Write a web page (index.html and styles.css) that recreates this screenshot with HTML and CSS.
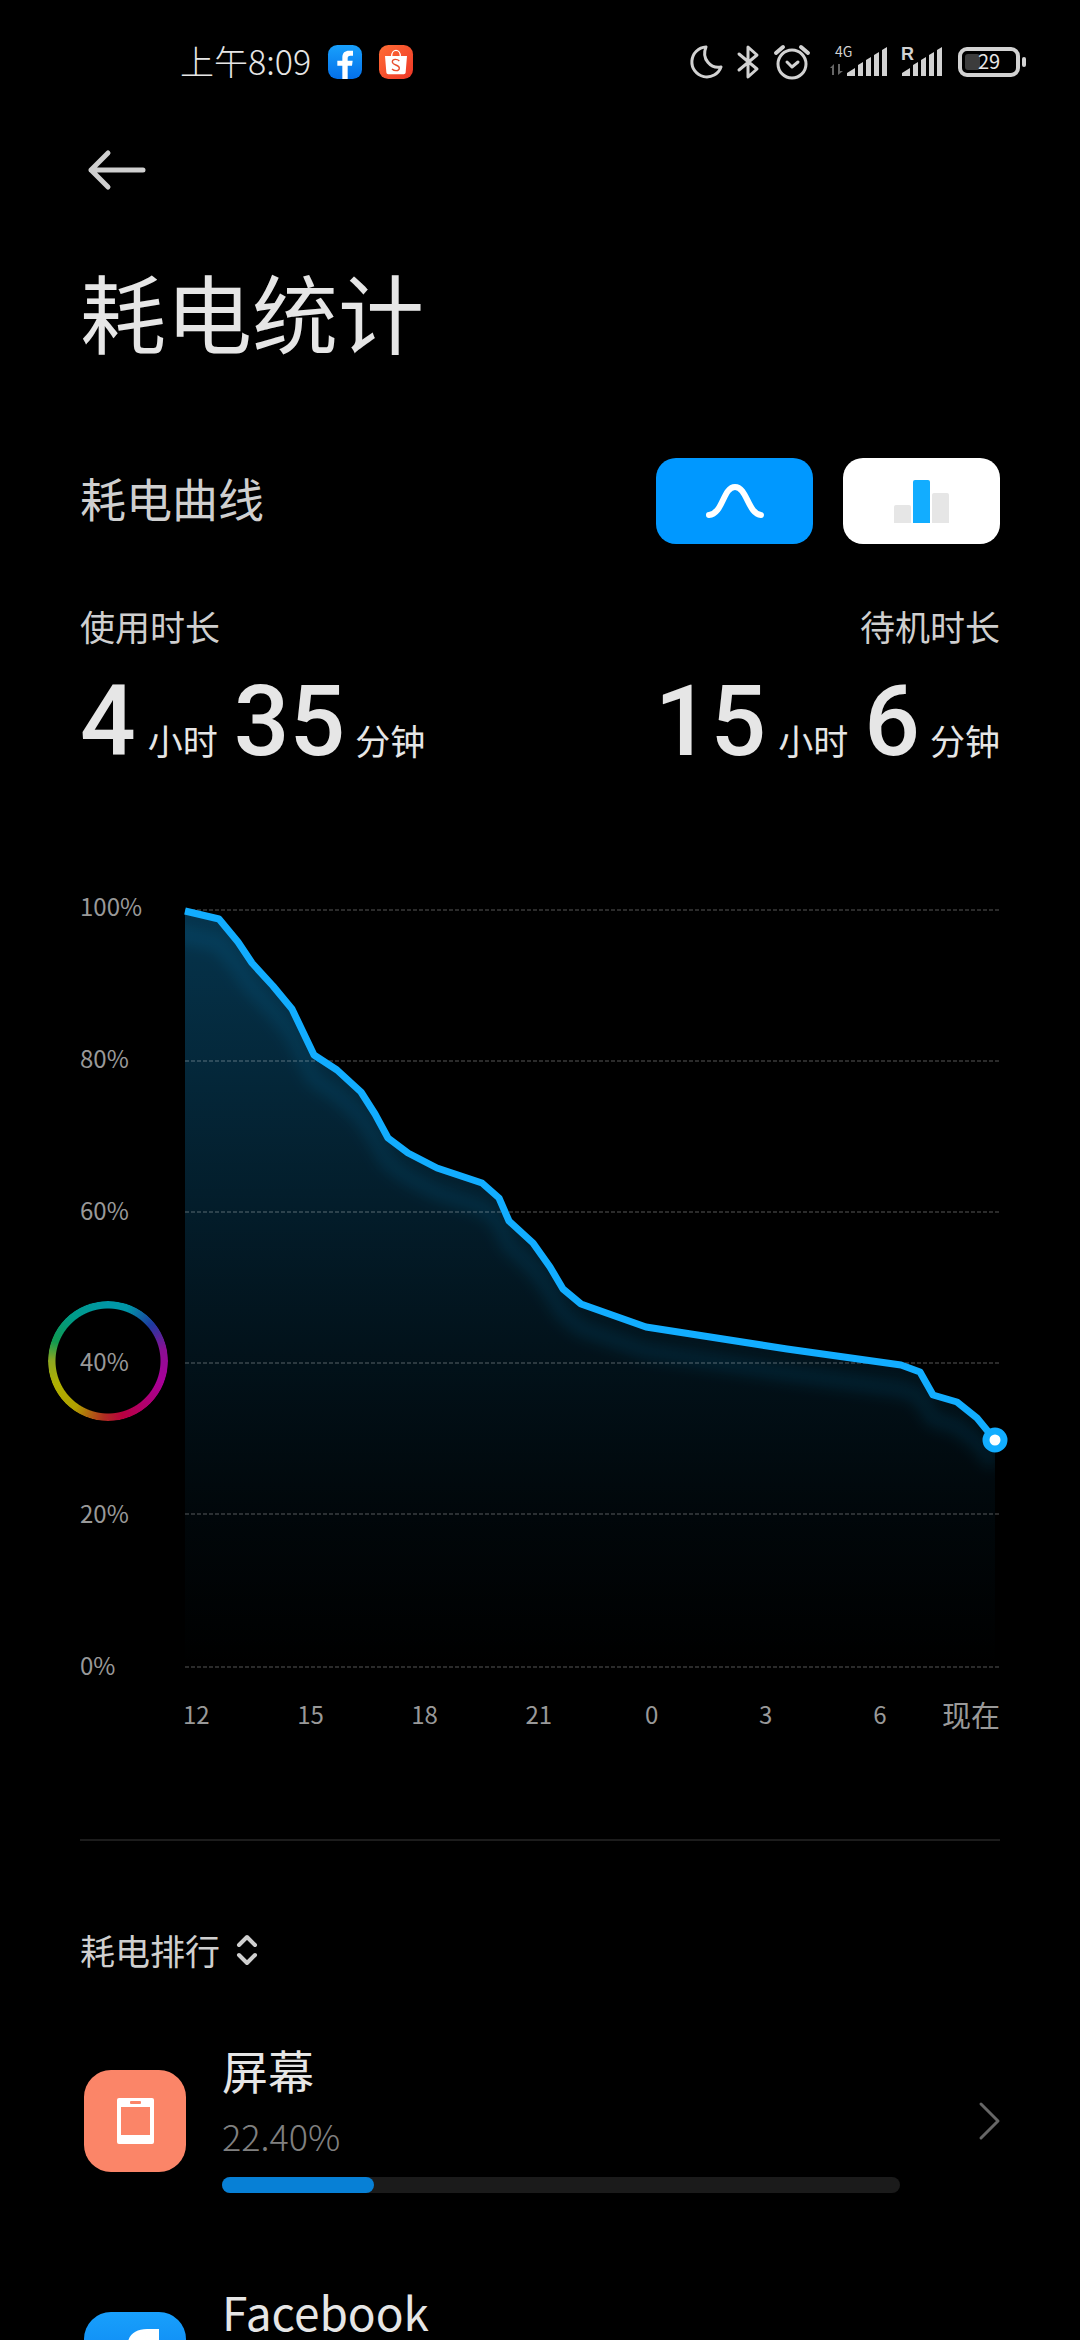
FILE: index.html
```html
<!DOCTYPE html>
<html lang="zh-CN">
<head>
    <meta charset="UTF-8">
    <meta name="viewport" content="width=device-width, initial-scale=1.0">
    <title>耗电统计</title>
    <link rel="stylesheet" href="styles.css">
</head>
<body>
    <div class="status-bar">
        <div class="status-left">
            <time datetime="08:09">上午8:09</time>
            <svg class="app-badge" viewBox="0 0 102 102">
                <rect width="102" height="102" rx="28" fill="url(#fb-bg)"/>
                <path d="M43 102V62H28V47h15V37c0-14 8-20 20-20h12v15h-8c-6 0-8 3-8 8v7h15l-2 15H59v40z" fill="#fff"/>
            </svg>
            <svg class="app-badge" viewBox="0 0 102 102">
                <rect width="102" height="102" rx="28" fill="url(#shop-bg)"/>
                <path d="M38 34c0-24 26-24 26 0" fill="none" stroke="#fff" stroke-width="4"/>
                <path d="M18 33h66l-4 49c0 4-3 6-6 6H28c-3 0-6-2-6-6z" fill="#fff"/>
                <path d="M61 48c-6-6-20-7-21 2-1 12 22 8 21 20-1 9-15 9-22 2" fill="none" stroke="#e8502f" stroke-width="4"/>
            </svg>
        </div>
        <div class="status-right">
            <svg width="32" height="34" viewBox="0 0 32 34" fill="none" stroke="#d2d2d2" stroke-width="3" stroke-linejoin="round">
                <path d="M16 2A15 15 0 1 0 31 22C21 24 11 14 16 2z"/>
            </svg>
            <svg width="24" height="34" viewBox="0 0 24 34" fill="none" stroke="#d2d2d2" stroke-width="3" stroke-linecap="round" stroke-linejoin="round">
                <path d="M3 9l18 15-9 8V2l9 8L3 25"/>
            </svg>
            <svg width="36" height="34" viewBox="0 0 36 34" fill="none" stroke="#d2d2d2" stroke-width="3" stroke-linecap="round" stroke-linejoin="round">
                <circle cx="18" cy="19" r="14"/>
                <path d="M13 17l5 5 6-5"/>
                <path d="M2 8l7-6M34 8l-7-6" stroke-width="4"/>
            </svg>
            <svg width="63" height="34" viewBox="0 0 63 34" fill="#d2d2d2">
                <text class="net" x="11" y="12">4G</text>
                <path d="M10 19v11H8v-7H6zM14 30V19h2v7h3z" fill="#666"/>
                <path d="M23 31v-3l8-5v8zM34 31V20l5-3v14zM42 31V15l5-3v19zM50 31V10l5-3v24zM58 31V5l5-3v29z"/>
            </svg>
            <svg width="43" height="34" viewBox="0 0 43 34" fill="#d2d2d2">
                <text class="roam" x="0" y="15">R</text>
                <path d="M1 31v-3l8-5v8zM12 31V20l5-3v14zM20 31V15l5-3v19zM28 31V10l5-3v24zM36 31V5l5-3v29z"/>
            </svg>
            <svg width="68" height="34" viewBox="0 0 68 34">
                <rect x="2" y="4" width="58" height="26" rx="7" fill="none" stroke="#d2d2d2" stroke-width="4"/>
                <rect x="64" y="12" width="4" height="10" rx="2" fill="#d2d2d2"/>
                <rect x="7" y="9" width="15" height="16" rx="3" fill="#3c3c3c"/>
                <text class="level" x="31" y="24" text-anchor="middle">29</text>
            </svg>
        </div>
    </div>

    <main class="page">
        <button type="button" class="back" aria-label="返回">
            <svg width="58" height="40" viewBox="0 0 58 40" fill="none" stroke="#d0d0d0" stroke-width="5" stroke-linecap="round" stroke-linejoin="round">
                <path d="M55 20H3M20 3L3 20l17 17"/>
            </svg>
        </button>

        <h1>耗电统计</h1>

        <div class="curve-head">
            <h2>耗电曲线</h2>
            <div class="switch">
                <button type="button" class="switch-btn active" aria-label="曲线">
                    <svg width="60" height="44" viewBox="0 0 60 44" fill="none" stroke="#fff" stroke-width="6" stroke-linecap="round">
                        <path d="M4 36C18 35 18 8 30 8s13 27 26 28"/>
                    </svg>
                </button>
                <button type="button" class="switch-btn" aria-label="柱状图">
                    <svg width="55" height="44" viewBox="0 0 55 44">
                        <path d="M0 44V28q0-2 2-2h13q2 0 2 2v16z" fill="#e6e6e6"/>
                        <path d="M19 44V3q0-2 2-2h13q2 0 2 2v41z" fill="#12adff"/>
                        <path d="M38 44V16q0-2 2-2h13q2 0 2 2v28z" fill="#e6e6e6"/>
                    </svg>
                </button>
            </div>
        </div>

        <div class="times">
            <div class="time-block">
                <h3>使用时长</h3>
                <p><b>4</b><span>小时</span><b>35</b><span>分钟</span></p>
            </div>
            <div class="time-block">
                <h3 class="right">待机时长</h3>
                <p><b>15</b><span>小时</span><b>6</b><span>分钟</span></p>
            </div>
        </div>

        <div class="chart">
            <div class="y-axis">
                <span>100%</span>
                <span>80%</span>
                <span>60%</span>
                <span class="ringed">40%</span>
                <span>20%</span>
                <span>0%</span>
            </div>
            <svg class="plot" viewBox="0 0 815 757">
                <defs>
                    <linearGradient id="fb-bg" x1="0" y1="0" x2="0" y2="1">
                        <stop offset="0" stop-color="#18a0fc"/>
                        <stop offset="1" stop-color="#0470ea"/>
                    </linearGradient>
                    <linearGradient id="shop-bg" x1="0" y1="0" x2="1" y2="1">
                        <stop offset="0" stop-color="#ff6d35"/>
                        <stop offset="1" stop-color="#ee3626"/>
                    </linearGradient>
                    <linearGradient id="area" x1="0" y1="0" x2="0" y2="1">
                        <stop offset="0" stop-color="#12adff" stop-opacity="0.3"/>
                        <stop offset="0.5" stop-color="#12adff" stop-opacity="0.13"/>
                        <stop offset="0.8" stop-color="#12adff" stop-opacity="0.04"/>
                        <stop offset="1" stop-color="#12adff" stop-opacity="0"/>
                    </linearGradient>
                    <filter id="soft" x="-10%" y="-10%" width="120%" height="120%">
                        <feGaussianBlur stdDeviation="7"/>
                    </filter>
                    <clipPath id="under">
                        <path d="M0 1L34 9L53 32L67 53L88 76L107 99L129 145L152 160L176 182L190 204L203 228L223 243L252 258L297 273L314 288L324 311L348 333L365 357L378 379L396 394L461 417L602 439L716 455L735 462L748 485L772 492L792 508L810 530V757H0z"/>
                    </clipPath>
                </defs>
                <rect width="810" height="757" fill="url(#area)" clip-path="url(#under)"/>
                <g clip-path="url(#under)">
                    <path class="glow" filter="url(#soft)" d="M-20 19L0 25L34 33L53 56L67 77L88 100L107 123L129 169L152 184L176 206L190 228L203 252L223 267L252 282L297 297L314 312L324 335L348 357L365 381L378 403L396 418L461 441L602 463L716 479L735 486L748 509L772 516L792 532L810 554"/>
                </g>
                <path class="grid" d="M0 0H815M0 151H815M0 302H815M0 453H815M0 604H815M0 757H815"/>
                <path class="line" d="M0 1L34 9L53 32L67 53L88 76L107 99L129 145L152 160L176 182L190 204L203 228L223 243L252 258L297 273L314 288L324 311L348 333L365 357L378 379L396 394L461 417L602 439L716 455L735 462L748 485L772 492L792 508L810 530"/>
                <circle cx="810" cy="530" r="9" fill="#fff" stroke="#12adff" stroke-width="7"/>
            </svg>
            <div class="x-axis">
                <span>12</span>
                <span>15</span>
                <span>18</span>
                <span>21</span>
                <span>0</span>
                <span>3</span>
                <span>6</span>
                <span class="now">现在</span>
            </div>
        </div>

        <hr>

        <button type="button" class="sort">
            耗电排行
            <svg width="22" height="30" viewBox="0 0 22 30" fill="none" stroke="#cfcfcf" stroke-width="4" stroke-linecap="round" stroke-linejoin="round">
                <path d="M3 10l8-8 8 8M3 20l8 8 8-8"/>
            </svg>
        </button>

        <ul class="ranking">
            <li>
                <a href="#screen">
                    <svg class="app-icon" viewBox="0 0 102 102">
                        <rect width="102" height="102" rx="27" fill="#fb8568"/>
                        <rect x="33" y="28" width="37" height="46" rx="2" fill="#fff"/>
                        <rect x="37" y="37" width="29" height="28" fill="#fb8568"/>
                        <rect x="46" y="31" width="11" height="3" rx="1" fill="#fb8568"/>
                    </svg>
                    <div class="info">
                        <h4>屏幕</h4>
                        <p>22.40%</p>
                        <div class="bar"><div class="fill" style="width: 22.4%"></div></div>
                    </div>
                    <svg width="22" height="38" viewBox="0 0 22 38" fill="none" stroke="#666" stroke-width="3" stroke-linecap="round" stroke-linejoin="round">
                        <path d="M3 2l17 17L3 36"/>
                    </svg>
                </a>
            </li>
            <li>
                <a href="#facebook">
                    <svg class="app-icon" viewBox="0 0 102 102">
                        <rect width="102" height="102" rx="27" fill="url(#fb-bg)"/>
                        <path d="M43 102V62H28V47h15V37c0-14 8-20 20-20h12v15h-8c-6 0-8 3-8 8v7h15l-2 15H59v40z" fill="#fff"/>
                    </svg>
                    <div class="info">
                        <h4>Facebook</h4>
                    </div>
                </a>
            </li>
        </ul>
    </main>
</body>
</html>
```
FILE: styles.css
```css
* {
    box-sizing: border-box;
    margin: 0;
    padding: 0;
}

body {
    display: flex;
    flex-direction: column;
    height: 100vh;
    overflow: hidden;
    background-color: #000;
    color: #e6e6e6;
    font-family: "Noto Sans CJK SC", sans-serif;
}

svg {
    display: block;
    flex-shrink: 0;
    overflow: visible;
}

button {
    border: none;
    background: none;
    color: inherit;
    font: inherit;
}

h1,
h2,
h3,
h4 {
    font-weight: 400;
}

/* status bar */
.status-bar {
    display: flex;
    flex-shrink: 0;
    justify-content: space-between;
    align-items: center;
    height: 124px;
    padding: 0 54px 0 180px;
}

.status-left {
    display: flex;
    align-items: center;
    gap: 17px;
    font-size: 34px;
    font-weight: 300;
}

.status-left time {
    padding-bottom: 4px;
}

.app-badge {
    width: 34px;
    height: 34px;
}

.status-right {
    display: flex;
    align-items: center;
    gap: 14px;
}

.net {
    font-size: 14px;
}

.roam {
    font-family: "Liberation Sans", sans-serif;
    font-size: 18px;
    font-weight: 700;
}

.level {
    fill: #e6e6e6;
    font-size: 20px;
}

/* page */
.page {
    flex: 1;
    min-height: 0;
    padding: 18px 80px 0;
    overflow-y: auto;
    scrollbar-width: none;
}

.back {
    display: block;
    padding: 8px;
}

h1 {
    margin-top: 63px;
    font-size: 86px;
    line-height: 100px;
}

.curve-head {
    display: flex;
    justify-content: space-between;
    align-items: center;
    margin-top: 97px;
}

h2 {
    padding-bottom: 8px;
    color: #cfcfcf;
    font-size: 46px;
    line-height: 60px;
}

.switch {
    display: flex;
    gap: 30px;
}

.switch-btn {
    display: flex;
    justify-content: center;
    align-items: center;
    width: 157px;
    height: 86px;
    border-radius: 20px;
    background-color: #fff;
}

.switch-btn.active {
    background-color: #0098ff;
}

.times {
    display: flex;
    justify-content: space-between;
    margin-top: 60px;
}

h3 {
    color: #cfcfcf;
    font-size: 35px;
    line-height: 44px;
}

h3.right {
    text-align: right;
}

.time-block p {
    display: flex;
    align-items: baseline;
    margin-top: 24px;
    line-height: 100px;
}

.time-block b {
    font-family: Roboto, sans-serif;
    font-size: 98px;
    font-weight: 500;
}

.time-block span {
    margin: 0 16px 0 12px;
    font-size: 35px;
}

.time-block span:last-child {
    margin: 0 0 0 10px;
}

/* chart */
.chart {
    display: grid;
    grid-template-columns: 103px 1fr;
    margin-top: 101px;
    color: #999;
    font-size: 24px;
    line-height: 30px;
}

.y-axis {
    display: flex;
    flex-direction: column;
    justify-content: space-between;
    align-items: flex-start;
}

.plot {
    width: calc(100% - 2px);
    margin: 19px 0 13px 2px;
}

.grid {
    fill: none;
    stroke: rgba(255, 255, 255, 0.34);
    stroke-width: 1;
    stroke-dasharray: 4 2;
}

.line {
    fill: none;
    stroke: #12adff;
    stroke-width: 7;
    stroke-linejoin: round;
}

.glow {
    fill: none;
    stroke: #12adff;
    stroke-opacity: 0.1;
    stroke-width: 16;
}

/* colour ring floating over the 40% label */
.ringed {
    position: relative;
    min-width: 56px;
}

.ringed::after {
    content: "";
    position: absolute;
    top: 50%;
    left: 50%;
    width: 120px;
    height: 120px;
    border-radius: 50%;
    background: conic-gradient(#0097a7, #0097a7 20deg, #1e3aa0 50deg, #8a0f93 78deg, #a8009a 110deg, #b0006c 140deg, #b80040 165deg, #b03020 185deg, #b0a000 215deg, #b0b000 245deg, #8fa820 270deg, #109a50 290deg, #009a88 320deg, #0097a7);
    mask: radial-gradient(circle, transparent 52px, #000 53px);
    transform: translate(-50%, -50%);
}

.x-axis {
    display: grid;
    grid-column: 2;
    grid-template-columns: repeat(7, 114fr) 18fr;
    margin-top: 19px;
}

.x-axis span {
    min-width: 24px;
    justify-self: start;
    text-align: center;
}

.x-axis .now {
    min-width: 0;
    justify-self: end;
    font-size: 29px;
    white-space: nowrap;
}

hr {
    margin-top: 110px;
    border: none;
    border-top: 2px solid #1c1c1c;
}

/* ranking */
.sort {
    display: flex;
    align-items: center;
    gap: 16px;
    margin-top: 87px;
    color: #cfcfcf;
    font-size: 35px;
    line-height: 44px;
}

.ranking {
    display: flex;
    flex-direction: column;
    gap: 82px;
    margin-top: 69px;
    list-style: none;
}

.ranking a {
    display: flex;
    align-items: center;
    min-height: 160px;
    padding: 0 0 0 4px;
    color: inherit;
    text-decoration: none;
}

.app-icon {
    width: 102px;
    height: 102px;
}

.info {
    flex: 1;
    align-self: flex-start;
    margin: 0 78px 0 36px;
}

h4 {
    font-size: 46px;
    line-height: 56px;
}

.info p {
    margin-top: 16px;
    color: #808080;
    font-size: 36px;
    font-weight: 300;
    line-height: 44px;
}

.bar {
    height: 16px;
    margin-top: 20px;
    border-radius: 8px;
    background-color: #1b1b1b;
}

.fill {
    height: 100%;
    border-radius: 8px;
    background-color: #0780d6;
}
```
